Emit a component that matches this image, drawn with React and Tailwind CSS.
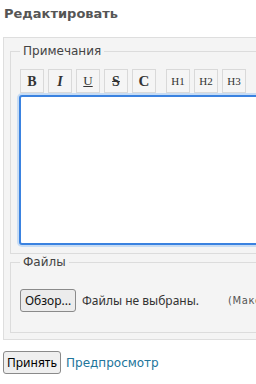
import React from 'react';

const dejavu = { fontFamily: '"DejaVu Sans", sans-serif' };

const ToolBtn = ({ children, className = '' }) => (
  <button
    type="button"
    className={`w-[24px] h-[24px] flex items-center justify-center border border-[#d9d9d9] bg-[#f5f5f5] text-[#333] font-['Liberation_Serif',serif] ${className}`}
  >
    {children}
  </button>
);

export default function App() {
  return (
    <div className="w-[256px] h-[384px] overflow-hidden bg-white">
      <h2 className="pt-[6px] pl-[4px] text-[13px] leading-[16px] font-bold text-[#555] font-['DejaVu_Sans',sans-serif]">
        Редактировать
      </h2>

      <div className="mt-[15px] ml-[3px] w-[300px] border border-[#dedede] bg-[#f4f4f4] px-[6px] pt-[6px] pb-[6px]">
        <fieldset className="border border-[#dcdcdc] pl-[9px] pt-[11px] pb-[8px]">
          <legend className="px-[3px] text-[12px] leading-[14px] text-[#444]" style={dejavu}>
            Примечания
          </legend>
          <div className="flex gap-[4px]">
            <ToolBtn className="text-[14px] font-bold">B</ToolBtn>
            <ToolBtn className="text-[14px] font-bold italic">I</ToolBtn>
            <ToolBtn className="text-[13px] underline">U</ToolBtn>
            <ToolBtn className="text-[14px] font-bold line-through">S</ToolBtn>
            <ToolBtn className="text-[15px] font-bold">C</ToolBtn>
            <ToolBtn className="ml-[6px] text-[11px]">H1</ToolBtn>
            <ToolBtn className="text-[11px]">H2</ToolBtn>
            <ToolBtn className="text-[11px]">H3</ToolBtn>
          </div>
          <textarea
            className="block mt-[2px] -ml-[1px] w-[280px] h-[150px] resize-none rounded-[3px] border-2 border-[#3a82e0] bg-white shadow-[0_0_0_2px_#c7dcf4] outline-none"
            defaultValue=""
          />
        </fieldset>

        <fieldset className="mt-[1px] border border-[#dcdcdc] pl-[9px] pt-[20px] pb-[20px]">
          <legend className="px-[3px] text-[12px] leading-[14px] text-[#444]" style={dejavu}>
            Файлы
          </legend>
          <div className="flex items-center whitespace-nowrap">
            <button
              type="button"
              className="h-[23px] w-[56px] rounded-[3px] border border-[#8a8a8a] bg-[#ececec] text-[12px] text-[#111] font-['Noto_Sans',sans-serif]"
            >
              Обзор...
            </button>
            <span className="ml-[6px] text-[12px] text-[#333] font-['Noto_Sans',sans-serif]">
              Файлы не выбраны.
            </span>
            <span className="ml-[29px] text-[10px] tracking-[0.6px] text-[#555]" style={dejavu}>
              (Максимальный размер: 2 МБ)
            </span>
          </div>
        </fieldset>
      </div>

      <div className="mt-[11px] ml-[3px] flex items-center gap-[5px]">
        <button
          type="button"
          className="h-[23px] w-[58px] rounded-[3px] border border-[#8a8a8a] bg-[#efefef] text-[12px] text-black font-['Noto_Sans',sans-serif]"
        >
          Принять
        </button>
        <a href="#" className="text-[12px] text-[#21759b]" style={dejavu}>
          Предпросмотр
        </a>
      </div>
    </div>
  );
}
